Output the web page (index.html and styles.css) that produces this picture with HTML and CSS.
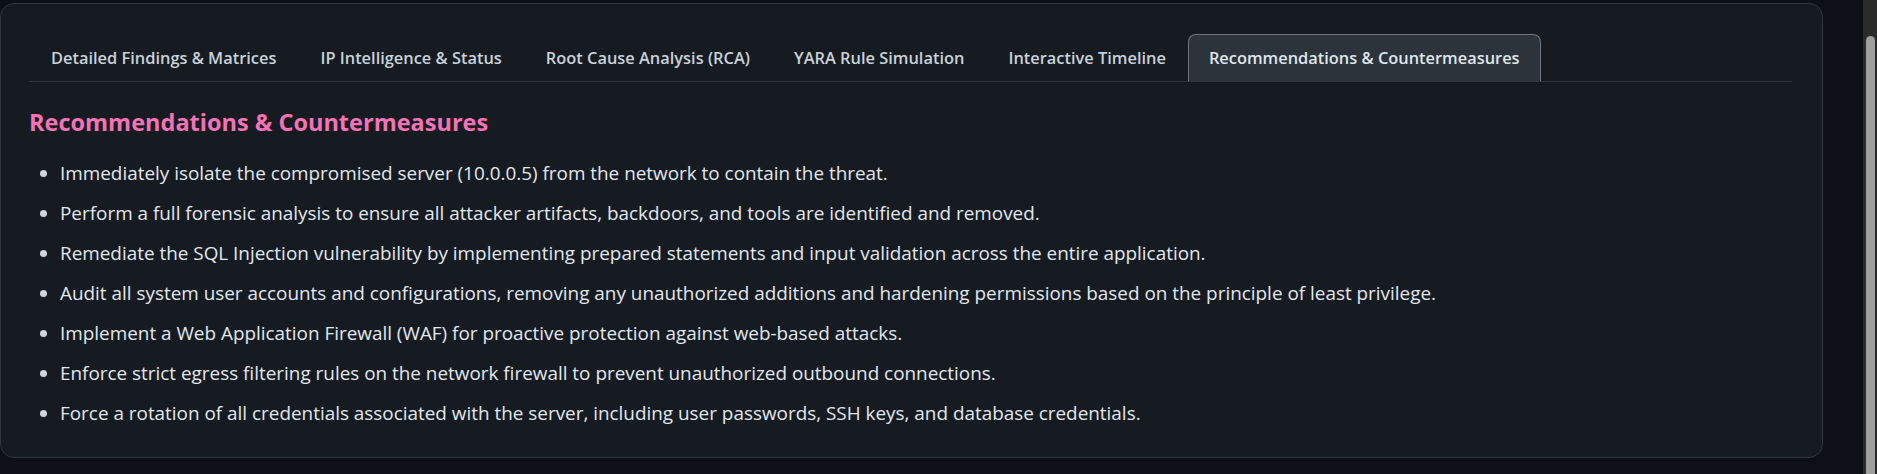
FILE: index.html
```html
<!DOCTYPE html>
<html lang="en">
<head>
<meta charset="utf-8">
<title>Recommendations &amp; Countermeasures</title>
<link rel="stylesheet" href="styles.css">
</head>
<body>
<div class="page">
  <main class="main">
    <section class="card">
      <nav class="tabs">
        <button class="tab">Detailed Findings &amp; Matrices</button>
        <button class="tab">IP Intelligence &amp; Status</button>
        <button class="tab">Root Cause Analysis (RCA)</button>
        <button class="tab">YARA Rule Simulation</button>
        <button class="tab">Interactive Timeline</button>
        <button class="tab active">Recommendations &amp; Countermeasures</button>
      </nav>
      <div class="panel">
        <h2 class="title">Recommendations &amp; Countermeasures</h2>
        <ul class="recs">
          <li>Immediately isolate the compromised server (10.0.0.5) from the network to contain the threat.</li>
          <li>Perform a full forensic analysis to ensure all attacker artifacts, backdoors, and tools are identified and removed.</li>
          <li>Remediate the SQL Injection vulnerability by implementing prepared statements and input validation across the entire application.</li>
          <li>Audit all system user accounts and configurations, removing any unauthorized additions and hardening permissions based on the principle of least privilege.</li>
          <li>Implement a Web Application Firewall (WAF) for proactive protection against web-based attacks.</li>
          <li>Enforce strict egress filtering rules on the network firewall to prevent unauthorized outbound connections.</li>
          <li>Force a rotation of all credentials associated with the server, including user passwords, SSH keys, and database credentials.</li>
        </ul>
      </div>
    </section>
  </main>
  <div class="scrollbar"><div class="thumb"></div></div>
</div>
</body>
</html>
```
FILE: styles.css
```css
html, body {
  margin: 0;
  height: 474px;
  overflow: hidden;
  background: #0d1117;
}

body {
  font-family: "Open Sans", "Noto Sans", "Liberation Sans", sans-serif;
  color: #e6edf3;
}

.page {
  display: flex;
  height: 474px;
}

.main {
  flex: 1;
  padding-top: 3px;
}

.card {
  width: 1823px;
  box-sizing: border-box;
  background: #161b22;
  border: 1px solid #30363d;
  border-radius: 14px;
  padding: 30px 30px 30px 28px;
}

.tabs {
  display: flex;
  border-bottom: 1px solid #30363d;
}

.tab {
  font-family: inherit;
  font-size: 16.4px;
  font-weight: 600;
  line-height: 24px;
  color: #c9d1d9;
  background: transparent;
  border: 1px solid transparent;
  border-bottom: none;
  border-radius: 8px 8px 0 0;
  padding: 11px 21px;
  margin: 0;
}

.tab.active {
  background: #2d333b;
  border-color: #6e7681;
  color: #dfe6ee;
  padding: 11px 20px;
}

.title {
  margin: 26px 0 0;
  font-size: 23.5px;
  line-height: 29px;
  font-weight: 700;
  color: #f472b6;
}

.recs {
  margin: 23px 0 0;
  padding-left: 31px;
  font-size: 18.9px;
  line-height: 27px;
  color: #e1e7ee;
}

.recs li + li {
  margin-top: 13px;
}

.recs li::marker {
  color: #d0d6dd;
}

.scrollbar {
  width: 14px;
  height: 474px;
  background: #2b2b2b;
  box-sizing: border-box;
  padding: 36px 2px 0 3px;
}

.thumb {
  height: 100%;
  background: #9f9f9f;
  border-radius: 5px 5px 0 0;
}
```
